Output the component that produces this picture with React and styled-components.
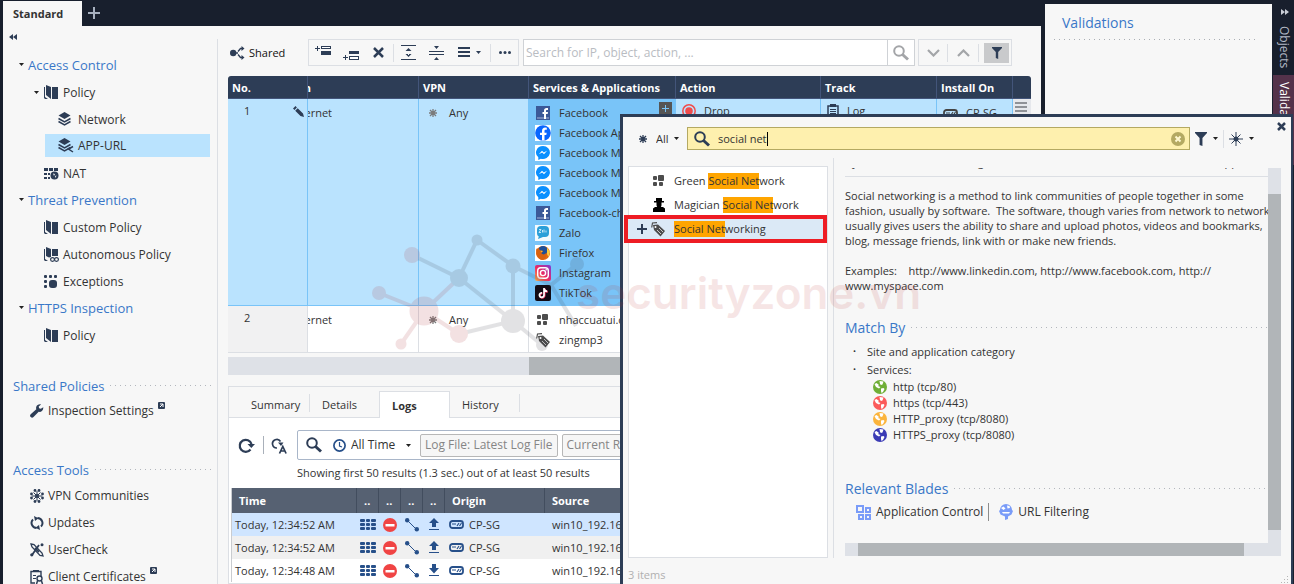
import React from 'react';
import styled, { createGlobalStyle, css } from 'styled-components';

const c = {
  night: '#181f2d',
  navy: '#2d3d56',
  paper: '#f7f7f7',
  line: '#dcdfe4',
  text: '#333333',
  blue: '#3a77c8',
  sky: '#bae3fe',
  skyDeep: '#79c4f8',
  track: '#dee1e7',
  thumb: '#b1b5b8',
};

const Global = createGlobalStyle`
  *, *::before, *::after { box-sizing: border-box; }
  body { margin: 0; background: ${c.night}; color: ${c.text}; font: 12px/16px "Open Sans", "Noto Sans", sans-serif; overflow: hidden; }
  button, input, select { font: inherit; color: inherit; margin: 0; }
  h2, p, ul { margin: 0; padding: 0; font-weight: 400; }
  ul { list-style: none; }
  a { color: inherit; text-decoration: none; }
  svg { display: block; flex: none; }
`;

/* ---------- icons ---------- */

const Svg = ({ w = 16, h = 16, color = c.navy, children, ...rest }) => (
  <svg width={w} height={h} viewBox={`0 0 ${w} ${h}`} fill={color} aria-hidden="true" {...rest}>{children}</svg>
);
const Caret = ({ color = '#222' }) => <Svg w={5} h={3} color={color}><path d="M0 0h5L2.5 3z" /></Svg>;
const DoubleArrow = ({ color, flip }) => (
  <Svg w={8} h={6} color={color}><path d={flip ? 'M0 0l4 3-4 3zM4 0l4 3-4 3z' : 'M4 0v6L0 3zM8 0v6L4 3z'} /></Svg>
);
const PolicyIcon = () => (
  <Svg w={15} h={15}><path d="M0 2h1v10l3 2H1l-1-1zM2 0l5 2v12L2 10zM8 2h6v12H8z" /></Svg>
);
const AutonomousIcon = () => (
  <Svg w={15} h={15}>
    <path d="M0 2h1v10l3 2H1l-1-1zM2 0l5 2v8L5 10.500 2 9zM8 2h6v7H8z" />
    <g fill="none" stroke={c.navy} strokeWidth="1.200"><circle cx="8.500" cy="12.500" r="1.900" /><circle cx="12.500" cy="12.500" r="1.900" /></g>
  </Svg>
);
const LayersIcon = ({ shared }) => (
  <Svg w={16} h={15}>
    <path d="M6.500 0L12.500 3.500 6.500 7 .5 3.500z" />
    <path d="M.5 6.500l6 3.500 6-3.500M.5 9.500l6 3.500 6-3.500" fill="none" stroke={c.navy} strokeWidth="1.500" />
    {shared && <path d="M15 8.500l-4.500 2.500 4.500 3" fill="none" stroke={c.navy} strokeWidth="1.500" />}
  </Svg>
);
const NatIcon = () => (
  <Svg w={15} h={13}>
    <path d="M0 1h4v3H0zM5 1h4v3H5zM10 1h4v3h-4zM0 6h3v2H0zM4 6h2v2H4zM0 10h3v2H0zM4 10h2v2H4z" />
    <circle cx="10.500" cy="8.500" r="4" />
    <path d="M9 6.500l2 .5-1 2zM11 9l1.500-.5L11.500 11z" fill={c.paper} />
  </Svg>
);
const ExceptionsIcon = () => (
  <Svg w={15} h={14}>
    <rect width="3" height="3" rx="1" /><rect x="5" width="3" height="3" rx="1" /><rect x="10" width="3" height="3" rx="1" />
    <rect y="5" width="3" height="3" rx="1" /><rect y="10" width="3" height="3" rx="1" /><rect x="5" y="5" width="8" height="8" rx="3" />
  </Svg>
);
const WrenchIcon = () => (
  <Svg w={14} h={14}><path d="M13.300 3.300l-2.500 1.500-1.700-.6-.4-1.800L11 .5C9 0 6.800 1 6.200 3c-.2.800-.1 1.500.1 2.200L.7 10.300a1.900 1.900 0 1 0 2.800 2.700l5.200-5.200c2.300.6 4.800-1.300 4.600-4.500z" /></Svg>
);
const VpnIcon = () => (
  <Svg w={14} h={14}>
    <path d="M7 2v10M2 7h10M3.500 3.500l7 7M10.500 3.500l-7 7" stroke={c.navy} />
    {[[5, 1.5], [9, 1.5], [1.5, 5], [1.5, 9], [12.5, 5], [12.5, 9], [5, 12.5], [9, 12.5]].map(([x, y]) => <circle key={`${x}-${y}`} cx={x} cy={y} r="1.400" />)}
    <circle cx="7" cy="7" r="2" />
  </Svg>
);
const UpdatesIcon = () => (
  <Svg w={14} h={14}>
    <path d="M6.500 12A5 5 0 0 1 3 3.500M7.500 2A5 5 0 0 1 11 10.500" fill="none" stroke={c.navy} strokeWidth="2" />
    <path d="M4 0l4.500 2.200L5 5zM10 14l-4.500-2.200L9 9z" />
  </Svg>
);
const UserCheckIcon = () => (
  <Svg w={14} h={14}>
    <path d="M1 1l3 .5 8 8.500 1 3-3-.5L2 4z" fill="none" stroke={c.navy} strokeWidth="1.300" />
    <path d="M9 2L2 12M5 5l4 4" stroke={c.navy} strokeWidth="1.800" /><circle cx="12" cy="1.800" r="1.500" /><circle cx="1.800" cy="11.800" r="1.600" />
  </Svg>
);
const CertIcon = () => (
  <Svg w={14} h={14}>
    <path d="M5 13H1V1.500h10V6" fill="none" stroke={c.navy} strokeWidth="1.400" /><path d="M3 0h6v2H3zM3 5h3v1H3zM3 8h3v1H3z" />
    <circle cx="9.500" cy="8.500" r="2.500" fill="none" stroke={c.navy} strokeWidth="1.400" /><path d="M7.500 11L6.500 14M11.500 11l1 3" stroke={c.navy} strokeWidth="1.500" />
  </Svg>
);
const ExternalIcon = () => (
  <Svg w={7} h={7}><rect width="7" height="7" rx="1" /><path d="M2 2h3v3M5 2L2 5" fill="none" stroke="#fff" /></Svg>
);
const SharedIcon = () => (
  <Svg w={15} h={14}>
    <circle cx="3.200" cy="7" r="3.200" /><path d="M6 7h2M12 2.500h-1.500L8 5.500M12 11.500h-1.500L8 8.500" fill="none" stroke={c.navy} strokeWidth="1.300" />
    <path d="M11.500 0l3 2.500-3 2.500zM11.500 9l3 2.500-3 2.500z" />
  </Svg>
);
const AddAbove = () => (
  <Svg w={16} h={16}><path d="M2 1h1v2h2v1H3v2H2V4H0V3h2zM6 1h10v3H6zM6 6h10v4H6z" /><path d="M7 2h8v1H7z" fill="#fff" /></Svg>
);
const AddBelow = () => (
  <Svg w={16} h={16}><path d="M2 10h1v2h2v1H3v2H2v-2H0v-1h2zM6 6h10v3H6zM6 11h10v4H6z" /><path d="M7 12h8v2H7z" fill="#fff" /></Svg>
);
const CrossIcon = ({ w = 11, t = 2.5 }) => (
  <Svg w={w} h={w}><path d={`M1 1L${w - 1} ${w - 1}M${w - 1} 1L1 ${w - 1}`} stroke={c.navy} strokeWidth={t} /></Svg>
);
const ExpandIcon = () => <Svg w={15} h={16}><path d="M0 0h15v1H0zM0 14h15v1H0zM7.500 3l3 3h-6zM7.500 12l3-3h-6zM7 5h1v1H7zM7 9h1v1H7z" /></Svg>;
const CollapseIcon = () => <Svg w={15} h={16}><path d="M0 6h15v1H0zM0 9h15v1H0zM5 1h5L7.500 4zM5 15h5L7.500 12z" /></Svg>;
const MenuLines = ({ w = 12, color }) => <Svg w={w} h={11} color={color}><path d={`M0 0h${w}v2H0zM0 4h${w}v2H0zM0 8h${w}v2H0z`} /></Svg>;
const DotsIcon = () => <Svg w={12} h={3}><circle cx="1.500" cy="1.500" r="1.500" /><circle cx="6" cy="1.500" r="1.500" /><circle cx="10.500" cy="1.500" r="1.500" /></Svg>;
const SearchIcon = ({ color = c.navy }) => (
  <Svg w={16} h={16}><circle cx="6" cy="6" r="4.800" fill="none" stroke={color} strokeWidth="2" /><path d="M9.500 9.500l5.500 5" stroke={color} strokeWidth="3" /></Svg>
);
const Chevron = ({ up }) => <Svg w={13} h={8}><path d={up ? 'M1 7l5.500-5.500L12 7' : 'M1 1l5.500 5.500L12 1'} fill="none" stroke="#a3a5a8" strokeWidth="2.200" /></Svg>;
const FunnelIcon = ({ w = 10 }) => <Svg w={w} h={w + 2}><path d={`M0 0h${w}v1L${w * 0.62} ${w * 0.5}V${w + 2}L${w * 0.38} ${w + 1}V${w * 0.5}L0 1z`} /></Svg>;
const Asterisk = ({ color = '#7b7b7b' }) => (
  <Svg w={8} h={8}><path d="M4 0v8M0 4h8M1 1l6 6M7 1L1 7" stroke={color} strokeWidth="1.300" /></Svg>
);
const PencilIcon = () => <Svg w={11} h={11}><path d="M0 2.500L2.500 0l1.400 1.400L1.500 4zM2.200 4.700l2.500-2.500L10 7.500 11 11 7.500 10z" /></Svg>;
const SiteIcon = () => (
  <Svg w={12} h={12} color="#4d4d4d"><rect y="1" width="4" height="4" rx="1" /><rect x="5" width="6" height="6" rx="1" /><rect y="7" width="4" height="4" rx="1" /><rect x="6" y="7" width="4" height="4" rx="1" /></Svg>
);
const TagIcon = () => (
  <Svg w={15} h={15} color="#4d4d4d">
    <path d="M2 3l5-.5L14 9l-4.500 5.500L3 8z" /><path d="M.7 5.500L1.500 1l4.500-.3" fill="none" stroke="#4d4d4d" strokeWidth="1.200" />
    <circle cx="4.500" cy="5" r="1" fill="#fff" /><path d="M6 8l4 4M8 6l4 4" stroke="#eee" strokeWidth=".8" />
  </Svg>
);
const MagicianIcon = () => <Svg w={12} h={14} color="#000"><path d="M3 0h6v3h2v1.500H1V3h2zM3.500 4h5v3a2.500 2.500 0 0 1-5 0zM0 14v-3.500L2 9h8l2 1.500V14zM5 8h2v2H5z" /></Svg>;
const PlusIcon = ({ w = 12, t = 2, color }) => <Svg w={w} h={w} color={color}><path d={`M${(w - t) / 2} 0h${t}v${w}h-${t}zM0 ${(w - t) / 2}h${w}v${t}H0z`} /></Svg>;
const DropIcon = () => <Svg w={14} h={14}><circle cx="7" cy="7" r="6.200" fill="none" stroke="#f04c4c" strokeWidth="1.500" /><circle cx="7" cy="7" r="3.800" fill="#f04c4c" /></Svg>;
const LogIcon = () => (
  <Svg w={12} h={14}><path d="M1 2h10v11H1z" fill="none" stroke={c.navy} strokeWidth="1.500" /><path d="M3 0h6v3H3zM3 5h6v1H3zM3 7h6v1H3zM3 9h6v1H3z" /></Svg>
);
const GatewayIcon = ({ color = '#444' }) => (
  <Svg w={15} h={9}><rect x="1" y="1" width="13" height="7" rx="2.500" fill="none" stroke={color} strokeWidth="1.800" /><path d="M3 4h4M8 6l2-3M10.500 6l2-3" stroke={color} strokeWidth="1.200" /></Svg>
);
const FbSquare = () => (
  <Svg><rect x="1" y="1" width="14" height="14" fill="#3b5998" /><path d="M2 12h12v2H2z" fill="#7186b8" /><path d="M9 14V9H7.500V7H9V5.500C9 4 10 3 11.500 3H13v2h-1c-.7 0-1 .3-1 1v1h2l-.3 2H11v5z" fill="#fff" /></Svg>
);
const FbRound = () => (
  <Svg><rect width="16" height="16" fill="#fff" /><circle cx="8" cy="8" r="7.800" fill="#0866ff" /><path d="M7 15.500V10H5V7.700h2V6c0-2.300 1.200-3.500 3.200-3.500l1.600.2v2h-1c-1 0-1.300.5-1.300 1.300v1.700h2.200L11.300 10H9.500v5.500z" fill="#fff" /></Svg>
);
const Messenger = () => (
  <Svg><rect width="16" height="16" fill="#fff" /><path d="M8 1a7 6.500 0 0 0-4.700 11.300V15l2.500-1.300A7 6.500 0 1 0 8 1z" fill="#0a90ff" /><path d="M3.800 9.200L7 5.800l1.800 1.700 3.300-1.700L9 9.200 7.200 7.500z" fill="#fff" /></Svg>
);
const ZaloIcon = () => (
  <Svg><rect width="16" height="16" fill="#f4fafd" /><rect x="2" y="1" width="12" height="11" rx="4" fill="#2b9fd8" /><path d="M4 11l-1 3 5-2z" fill="#2b9fd8" /><path d="M4 4.500h2L4 7.500h2M7.500 5v2.500M9 4.500v3M11 5.500v2" fill="none" stroke="#d5effb" strokeWidth=".9" /></Svg>
);
const FirefoxIcon = () => (
  <Svg><rect width="16" height="16" fill="#fff" /><circle cx="8" cy="8" r="7" fill="#e66b12" /><circle cx="8" cy="5.500" r="4.500" fill="#1f4f96" /><path d="M1.300 4c1.500-1 3 0 4 1.500l3 .5-2 2c1 2 4 2 5-.5C12 13 9 15 7 15 3 14 .5 9 1.300 4z" fill="#d9620f" /><path d="M12 2.500l3 4.500-1.500 5-1.500-3z" fill="#fbc93d" /><path d="M5.500 5.500l2.500.5-2 1.500z" fill="#f9b233" /></Svg>
);
const InstagramIcon = () => (
  <Svg>
    <defs><linearGradient id="ig" x1="0" y1="1" x2="1" y2="0"><stop offset="0" stopColor="#fdb84a" /><stop offset=".45" stopColor="#ee2a5e" /><stop offset="1" stopColor="#7a3bd8" /></linearGradient></defs>
    <rect width="16" height="16" rx="2" fill="url(#ig)" /><g fill="none" stroke="#fff" strokeWidth="1.400"><rect x="2.700" y="2.700" width="10.600" height="10.600" rx="3" /><circle cx="8" cy="8" r="2.600" /></g><circle cx="11.200" cy="4.800" r=".8" fill="#fff" />
  </Svg>
);
const TikTokIcon = () => (
  <Svg><rect width="16" height="16" rx="2" fill="#120b14" /><path d="M9 3v7a2.300 2.300 0 1 1-2-2.200M9 3.500c.3 1.700 1.500 2.700 3.200 2.800" fill="none" stroke="#f5315d" strokeWidth="1.800" transform="translate(.6 .5)" /><path d="M9 3v7a2.300 2.300 0 1 1-2-2.200M9 3.500c.3 1.700 1.500 2.700 3.200 2.800" fill="none" stroke="#fff" strokeWidth="1.700" /></Svg>
);
const RefreshIcon = ({ auto }) => (
  <Svg w={17} h={17}>
    {auto ? (
      <><path d="M6 11A4.300 4.300 0 1 1 9.500 4.500" fill="none" stroke={c.navy} strokeWidth="1.700" /><path d="M7 5.500h5.500L10 9z" /><path d="M8.500 16.500l3.300-7 3.300 7M10 14h4" fill="none" stroke={c.navy} strokeWidth="1.700" /></>
    ) : (
      <><path d="M12.500 12.500A6 6 0 1 1 13.500 7" fill="none" stroke={c.navy} strokeWidth="2.200" /><path d="M9.500 7H17L13.300 11z" /></>
    )}
  </Svg>
);
const ClockIcon = () => <Svg w={13} h={13}><circle cx="6.500" cy="6.500" r="5.600" fill="none" stroke="#27508a" strokeWidth="1.700" /><path d="M6.500 3v4l2.500 1" fill="none" stroke="#27508a" strokeWidth="1.200" /></Svg>;
const BricksIcon = () => (
  <Svg w={16} h={12} color="#27508a">{[0, 4, 8].map((y) => [0, 6, 11].map((x) => <rect key={`${x}-${y}`} x={x} y={y} width={x === 6 ? 4 : 5} height="3" rx="1" />))}</Svg>
);
const BlockIcon = () => <Svg w={14} h={14}><circle cx="7" cy="7" r="7" fill="#f04444" /><path d="M2.500 6h9v2.500h-9z" fill="#fff" /></Svg>;
const LinkNodes = () => <Svg w={14} h={14} color="#27508a"><path d="M2 2l10 10" stroke="#27508a" /><circle cx="2.200" cy="2.200" r="2.200" /><circle cx="11.800" cy="11.300" r="2.200" /></Svg>;
const UpDown = ({ down }) => <Svg w={10} h={13} color="#27508a"><path d={down ? 'M3 0h4v4h3L5 9.500 0 4h3z' : 'M5 0l5 5H7v4H3V5H0z'} /><path d="M0 11h10v1H0z" /></Svg>;
const ClearIcon = () => <Svg w={14} h={14}><circle cx="7" cy="7" r="7" fill="#b4a962" /><path d="M4.500 4.500l5 5M9.500 4.500l-5 5" stroke="#fff8d0" strokeWidth="2" /></Svg>;
const SparkIcon = () => (
  <Svg w={14} h={14}><path d="M7 0v14M0 7h14M2.500 2.500l9 9M11.500 2.500l-9 9" stroke={c.navy} /><circle cx="7" cy="7" r="2.500" /></Svg>
);
const Globe = ({ color }) => (
  <Svg w={14} h={14}><circle cx="7" cy="7" r="7" fill={color} /><path d="M1.500 4l2-1L6 5l-1 1 2.500 1L6 8.500 3 7zM6.500 1l4 .5-1 3-1.500.5-1-1zM8 8.500l2.500-.5 1 1-1.500 3-1.500 1-.5-2z" fill="#fff" /></Svg>
);
const AppControlIcon = () => (
  <Svg w={15} h={15}><g fill="none" stroke="#7a9cf8" strokeWidth="2"><rect x="1" y="1" width="6" height="6" /><rect x="10" y="3" width="4" height="4" /><rect x="3" y="10" width="4" height="4" /><rect x="10" y="10" width="4" height="4" /></g></Svg>
);
const UrlFilterIcon = () => (
  <Svg w={14} h={16} color="#7a9cf8"><path d="M7 0a6 6 0 0 1 6 6l1 1-1.500 3.500L9 12.500V15l-3 1v-3.500L1.500 10.500 0 7l1-1a6 6 0 0 1 6-6z" /><path d="M2 4l2.500-1.500 2 2-2 1.500zM8 1.500l2.500.5.5 2-2.500.5zM3 8l8 0-1 1.500H4z" fill="#fff" /></Svg>
);
const Grip = () => <Svg w={8} h={8} color="#b5b5b5"><path d="M6 0h1v1H6zM6 3h1v1H6zM3 3h1v1H3zM6 6h1v1H6zM3 6h1v1H3zM0 6h1v1H0z" /></Svg>;

/* ---------- window frame ---------- */

const Frame = styled.div`
  position: relative;
  display: flex;
  height: 100vh;
  padding-left: 3px;
  overflow: hidden;
`;
const Workspace = styled.main`
  flex: 1;
  min-width: 0;
  display: flex;
  flex-direction: column;
`;
const TabStrip = styled.div`
  display: flex;
  align-items: center;
  gap: 6px;
  height: 26px;
`;
const PageTab = styled.button`
  align-self: flex-end;
  width: 79px;
  height: 25px;
  padding: 0 0 0 10px;
  border: 0;
  background: ${c.paper};
  font-size: 11px;
  font-weight: 700;
  text-align: left;
`;
const BareButton = styled.button`
  display: inline-flex;
  align-items: center;
  gap: 6px;
  padding: 0;
  border: 0;
  background: none;
`;
const Page = styled.div`
  flex: 1;
  min-height: 0;
  display: flex;
  background: ${c.paper};
`;

/* ---------- sidebar ---------- */

const Sidebar = styled.nav`
  width: 215px;
  flex: none;
  margin-top: 13px;
  border-right: 1px solid ${c.line};
`;
const CollapseRow = styled.div`
  height: 13px;
  padding-left: 6px;
  display: flex;
  align-items: flex-start;
  line-height: 1;
  & > button { margin-top: -5px; }
`;
const Group = styled.button`
  display: flex;
  align-items: center;
  gap: 4px;
  height: 27px;
  width: 100%;
  padding: 0 0 2px 16px;
  border: 0;
  background: none;
  font-size: 13px;
  color: ${c.blue};
`;
const NavItem = styled.a`
  display: flex;
  align-items: center;
  gap: ${(p) => p.$gap || 5}px;
  height: ${(p) => p.$h || 27}px;
  padding-left: ${(p) => p.$indent}px;
`;
const ActiveItem = styled(NavItem)`
  height: 23px;
  margin: 1px 7px 3px 42px;
  background: ${c.sky};
`;
const IconSlot = styled.span`
  display: flex;
  justify-content: flex-start;
  width: ${(p) => p.$w || 14}px;
  flex: none;
`;
const Raised = styled.span`
  align-self: flex-start;
  padding-top: 4px;
`;
const DottedHeading = styled.h2`
  display: flex;
  align-items: center;
  gap: 6px;
  height: 25px;
  font-size: ${(p) => p.$size || 13}px;
  color: ${c.blue};
  &::after {
    content: '';
    flex: 1;
    height: 1px;
    background: repeating-linear-gradient(90deg, #b3b7bd 0 1px, transparent 1px 5px);
  }
`;
const SideSection = styled.section`
  margin-top: ${(p) => p.$gap}px;
  & > h2 { padding: 0 4px 0 10px; }
`;

/* ---------- rule base ---------- */

const Main = styled.section`
  flex: 1;
  min-width: 0;
  padding: 13px 10px 0;
  display: flex;
  flex-direction: column;
`;
const Toolbar = styled.div`
  display: flex;
  align-items: center;
  height: 27px;
  margin-bottom: 10px;
`;
const SharedLabel = styled.span`
  display: flex;
  align-items: center;
  gap: 4px;
  width: 80px;
  padding-left: 2px;
  font-size: 11px;
  color: #111;
`;
const ToolGroup = styled.div`
  display: flex;
  align-items: center;
  height: 27px;
  padding: 0 6px;
  border: 1px solid ${c.line};
`;
const Tool = styled.button`
  display: inline-flex;
  align-items: center;
  justify-content: center;
  gap: 6px;
  width: ${(p) => p.$w || 28}px;
  height: 20px;
  padding: 0;
  border: 0;
  background: ${(p) => (p.$on ? '#c9cacc' : 'none')};
`;
const Divider = styled.span`
  width: 1px;
  height: ${(p) => p.$h || 18}px;
  background: ${(p) => p.$color || c.line};
`;
const SearchField = styled.div`
  flex: 1;
  display: flex;
  height: 27px;
  margin: 0 3px 0 4px;
  border: 1px solid #cfd2d6;
  background: #fff;
  input { flex: 1; min-width: 0; padding: 0 2px; border: 0; background: none; outline: 0; }
  input::placeholder { color: #b9bcc2; opacity: 1; }
  button { width: 27px; justify-content: center; border-left: 1px solid #cfd2d6; }
`;
const NavGroup = styled(ToolGroup)`
  margin-right: 19px;
  padding: 0 2px 0 0;
`;

const Rules = styled.table`
  width: 100%;
  table-layout: fixed;
  border-collapse: separate;
  border-spacing: 0;
  background: #fff;
  font-size: 11px;
  th {
    height: 23px;
    padding: 2px 4px 0;
    background: ${c.navy};
    border-right: 1px solid #43557a;
    border-bottom: 1px solid #43557a;
    color: #fff;
    font-weight: 700;
    text-align: left;
    white-space: nowrap;
    overflow: hidden;
  }
  th:nth-child(1) { border-top-left-radius: 3px; }
  th:last-child { border-right: 0; border-top-right-radius: 3px; }
`;
const RuleCell = styled.td`
  padding: ${(p) => (p.$up ? 2 : 4)}px 6px 2px;
  vertical-align: top;
  overflow: hidden;
  white-space: nowrap;
  border-right: 1px solid ${(p) => (p.$on ? c.skyDeep : c.line)};
  border-bottom: 1px solid ${(p) => (p.$on ? c.skyDeep : c.line)};
  background: ${(p) => (p.$on === 'deep' ? c.skyDeep : p.$on ? c.sky : p.$gray ? '#f1f1f2' : '#fff')};
`;
const NumberCell = styled(RuleCell)`
  padding-left: 16px;
  padding-right: 3px;
`;
const MarginCell = styled(RuleCell)`
  padding: 3px 2px;
  border-right: 0;
  background: #e6e8ec;
`;
const Entry = styled.div`
  display: flex;
  align-items: center;
  gap: ${(p) => p.$gap || 8}px;
  height: 20px;
  justify-content: ${(p) => (p.$spread ? 'space-between' : 'flex-start')};
`;
const EntryIcon = styled.span`
  display: flex;
  justify-content: center;
  width: 16px;
  flex: none;
`;
const Clip = styled.div`
  display: flex;
  justify-content: flex-end;
  width: ${(p) => p.$w}px;
  margin-left: ${(p) => p.$pull}px;
  overflow: hidden;
`;
const AddHere = styled.button`
  display: flex;
  align-items: center;
  justify-content: center;
  width: 13px;
  height: 13px;
  margin: -10px -3px 0 auto;
  padding: 0;
  border: 0;
  background: #555;
`;
const ScrollTrack = styled.div`
  display: flex;
  height: ${(p) => p.$h}px;
  margin-top: ${(p) => p.$top || 0}px;
  background: ${c.track};
`;
const ScrollThumb = styled.div`
  flex: 1;
  margin: ${(p) => p.$margin || 0};
  background: ${c.thumb};
`;

/* ---------- logs ---------- */

const LogPanel = styled.section`
  flex: 1;
  min-height: 0;
  margin-top: 11px;
  border: 1px solid ${c.line};
  background: #fff;
`;
const LogTabs = styled.div`
  display: flex;
  align-items: flex-end;
  height: 31px;
  padding-left: 10px;
  border-bottom: 1px solid ${c.line};
  background: ${c.paper};
  font-size: 11px;
`;
const LogTab = styled.button`
  height: 26px;
  width: ${(p) => p.$w}px;
  padding: 2px 0 0 12px;
  text-align: left;
  background: ${c.paper};
  border: 0;
  ${(p) => p.$on && css`
    background: #fff;
    border: 1px solid ${c.line};
    border-bottom: 0;
    margin-bottom: -1px;
    height: 27px;
    font-weight: 700;
  `}
`;
const TabDivider = styled(Divider)`
  margin-bottom: 5px;
`;
const QueryRow = styled.div`
  display: flex;
  align-items: center;
  height: 30px;
  margin-top: 12px;
  padding: 0 9px;
`;
const QueryBox = styled.div`
  flex: 1;
  min-width: 0;
  display: flex;
  align-items: center;
  height: 30px;
  margin-left: 9px;
  padding-left: 8px;
  border: 1px solid #a9b6c9;
  border-radius: 2px;
  overflow: hidden;
`;
const Select = styled.select`
  appearance: none;
  width: ${(p) => p.$w}px;
  padding: 0;
  border: 0;
  background: none;
  font-size: ${(p) => p.$size || 12}px;
  line-height: 20px;
`;
const Chip = styled.button`
  height: 23px;
  margin-right: 4px;
  padding: 0 4px;
  border: 1px solid #b7b7b7;
  border-radius: 2px;
  background: #f6f6f6;
  color: #858585;
  white-space: nowrap;
`;
const ResultLine = styled.p`
  height: 28px;
  padding: 5px 0 0 68px;
  font-size: 11px;
`;
const LogTable = styled.table`
  width: calc(100% - 4px);
  margin-left: 2px;
  table-layout: fixed;
  border-collapse: separate;
  border-spacing: 0;
  border-left: 1px solid #c9ccd0;
  font-size: 11px;
  th {
    height: 25px;
    padding: 0 7px;
    background: #566172;
    border-right: 1px solid #424d5e;
    color: #fff;
    text-align: left;
  }
  td { height: 23px; padding: 0 0 0 3px; white-space: nowrap; overflow: hidden; }
`;
const LogRow = styled.tr`
  background: ${(p) => p.$bg};
`;
const CellFlex = styled.div`
  display: flex;
  align-items: center;
  gap: 5px;
  padding-left: ${(p) => p.$pad || 0}px;
`;

/* ---------- right side ---------- */

const Validations = styled.aside`
  width: 227px;
  flex: none;
  margin: 4px 1px 0 4px;
  padding: 8px 16px 0 9px;
  background: ${c.paper};
`;
const ValidationTitle = styled.h2`
  padding: 0 8px 6px;
  font-size: 14px;
  line-height: 21px;
  color: ${c.blue};
`;
const DottedRule = styled.div`
  height: 1px;
  background: repeating-linear-gradient(90deg, #a9adb3 0 1px, transparent 1px 5px);
`;
const Rail = styled.div`
  width: 21px;
  flex: none;
  display: flex;
  flex-direction: column;
  padding-top: 9px;
  & > button:first-child { padding-left: 8px; }
`;
const RailTab = styled.button`
  writing-mode: vertical-rl;
  height: ${(p) => p.$h}px;
  width: 21px;
  padding: ${(p) => p.$top}px 0 0;
  border: 0;
  text-align: left;
  line-height: 14px;
  color: ${(p) => (p.$on ? '#fff' : '#b4bac6')};
  background: ${(p) => (p.$on ? '#54324a' : 'none')};
`;

/* ---------- object picker ---------- */

const Picker = styled.div`
  position: absolute;
  top: 114px;
  left: 620px;
  right: 1px;
  bottom: 0;
  display: flex;
  flex-direction: column;
  border: 3px solid ${c.navy};
  border-bottom: 0;
  border-right-width: 2px;
  background: ${c.paper};
  font-size: 11px;
`;
const PickerBar = styled.div`
  display: flex;
  align-items: center;
  height: 41px;
  padding: 2px 0 0 16px;
  gap: 5px;
`;
const PickerSearch = styled.div`
  flex: 1;
  display: flex;
  align-items: center;
  height: 23px;
  margin-left: 3px;
  padding: 0 4px 0 6px;
  border: 1px solid #b4a962;
  background: #fef0ae;
  input { field-sizing: content; margin-left: 8px; padding: 0; border: 0; background: none; outline: 0; }
  & > button { margin-left: auto; }
`;
const TextCursor = styled.span`
  width: 1px;
  height: 14px;
  background: #000;
`;
const CloseButton = styled(BareButton)`
  align-self: flex-start;
  margin: 3px 5px 0 18px;
`;
const PickerBody = styled.div`
  flex: 1;
  min-height: 0;
  display: flex;
`;
const ResultList = styled.ul`
  width: 200px;
  flex: none;
  margin: 8px 5px 0 5px;
  padding-top: 2px;
  border: 1px solid ${c.line};
  background: #fff;
`;
const Result = styled.li`
  display: flex;
  align-items: center;
  gap: 7px;
  height: 24px;
  padding-left: 22px;
  mark { padding: 0 0 1px; background: #ffa500; color: inherit; }
`;
const PickedResult = styled(Result)`
  height: 28px;
  margin: -2px 0 0 -5px;
  padding-left: 9px;
  gap: 4px;
  border: 4px solid #ee1c24;
  background: #dbe9f6;
  & > span:last-child { margin-left: 4px; }
`;
const Detail = styled.div`
  flex: 1;
  min-width: 0;
  display: flex;
  flex-direction: column;
  padding: 10px 10px 0 11px;
  border-left: 1px solid ${c.line};
`;
const DetailView = styled.div`
  display: flex;
  height: 375px;
`;
const DetailText = styled.div`
  flex: 1;
  min-width: 0;
  overflow: hidden;
  & > hr { height: 1px; margin: 0 0 11px; border: 0; background: ${c.line}; }
`;
const CutLine = styled.div`
  display: flex;
  align-items: flex-end;
  justify-content: space-between;
  height: 8px;
  padding: 0 30px 6px 7px;
  overflow: hidden;
  line-height: 16px;
`;
const Prose = styled.p`
  line-height: 15px;
  white-space: pre;
`;
const Bullets = styled.ul`
  padding: 3px 0 0 22px;
  & > li { line-height: 18px; }
  & > li::before { content: '•'; float: left; margin-left: -14px; font-size: 8px; line-height: 16px; }
`;
const Service = styled.div`
  display: flex;
  align-items: center;
  gap: 6px;
  height: 16px;
  padding-left: 6px;
`;
const Blades = styled.div`
  display: flex;
  align-items: center;
  gap: 5px;
  height: 22px;
  padding-left: 11px;
  font-size: 12px;
`;
const VTrack = styled.div`
  width: 13px;
  flex: none;
  display: flex;
  flex-direction: column;
  padding: 26px 0 13px;
  background: ${c.track};
`;
const PickerFooter = styled.div`
  display: flex;
  align-items: flex-end;
  justify-content: space-between;
  height: 26px;
  padding: 0 2px 0 5px;
  color: #b0b0b0;
  line-height: 18px;
`;

/* ---------- watermark ---------- */

const Watermark = styled.div`
  position: absolute;
  top: 230px;
  left: 370px;
  pointer-events: none;
`;
const WatermarkName = styled.span`
  position: absolute;
  top: 37px;
  left: 206px;
  font: 600 44px/52px Inter, "Open Sans", sans-serif;
  color: #b92f2f;
  opacity: 0.12;
`;

const nodes = [
  [42, 25, 8, 1], [107, 10, 5.5], [89, 48, 9], [143, 36, 7.5], [9, 63, 7, 1], [54, 81, 14.5, 1],
  [143, 91, 12], [89, 104, 9, 1], [31, 114, 5.5, 1], [207, 34, 7], [172, 115, 6],
];
const links = [[42, 25, 89, 48], [107, 10, 89, 48], [107, 10, 143, 36], [89, 48, 54, 81, 1], [9, 63, 54, 81, 1], [54, 81, 31, 114, 1], [54, 81, 89, 104, 1], [89, 104, 143, 91], [89, 48, 143, 91], [143, 36, 143, 91], [143, 36, 181, 55], [181, 55, 207, 34], [181, 55, 206, 96], [143, 91, 172, 115]];

function NetworkMark() {
  return (
    <svg width="230" height="130" viewBox="0 0 230 130">
      <g opacity="0.14">
        {links.map(([a, b, d, e, red]) => <line key={`${a}-${b}-${d}-${e}`} x1={a} y1={b} x2={d} y2={e} stroke={red ? '#a83038' : '#3c3c48'} strokeWidth="4" />)}
        {nodes.map(([x, y, r, red]) => <circle key={`${x}-${y}`} cx={x} cy={y} r={r} fill={red ? '#b03038' : '#3c3c48'} />)}
      </g>
    </svg>
  );
}

/* ---------- data ---------- */

const services = [
  ['Facebook', FbSquare], ['Facebook Apps', FbRound], ['Facebook Messenger', Messenger], ['Facebook Mentions', Messenger],
  ['Facebook Media', Messenger], ['Facebook-chat', FbSquare], ['Zalo', ZaloIcon], ['Firefox', FirefoxIcon],
  ['Instagram', InstagramIcon], ['TikTok', TikTokIcon],
];
const logs = [
  ['Today, 12:34:52 AM', false, '#cfe5ff'], ['Today, 12:34:52 AM', false, '#f0f0f0'], ['Today, 12:34:48 AM', true, '#ffffff'],
];
const ports = [['http (tcp/80)', '#6fae36'], ['https (tcp/443)', '#fb5a5a'], ['HTTP_proxy (tcp/8080)', '#fbb43c'], ['HTTPS_proxy (tcp/8080)', '#3b3bb5']];

function Item({ icon, indent = 41, h, w, gap, caret, external, children }) {
  return (
    <NavItem href="#" $indent={indent} $h={h} $gap={gap}>
      {caret && <Caret />}
      <IconSlot $w={w}>{icon}</IconSlot>
      {children}
      {external && <Raised><ExternalIcon /></Raised>}
    </NavItem>
  );
}

function SideNav() {
  return (
    <Sidebar>
      <CollapseRow><BareButton aria-label="Collapse"><DoubleArrow /></BareButton></CollapseRow>
      <Group><Caret />Access Control</Group>
      <Item icon={<PolicyIcon />} indent={31} caret>Policy</Item>
      <Item icon={<LayersIcon />} indent={55} w={15}>Network</Item>
      <ActiveItem href="#" $indent={13}><IconSlot $w={15}><LayersIcon shared /></IconSlot>APP-URL</ActiveItem>
      <Item icon={<NatIcon />}>NAT</Item>
      <Group><Caret />Threat Prevention</Group>
      <Item icon={<PolicyIcon />}>Custom Policy</Item>
      <Item icon={<AutonomousIcon />}>Autonomous Policy</Item>
      <Item icon={<ExceptionsIcon />}>Exceptions</Item>
      <Group><Caret />HTTPS Inspection</Group>
      <Item icon={<PolicyIcon />}>Policy</Item>
      <SideSection $gap={24}>
        <DottedHeading>Shared Policies</DottedHeading>
        <Item icon={<WrenchIcon />} indent={27} h={25} gap={4} external>Inspection Settings</Item>
      </SideSection>
      <SideSection $gap={34}>
        <DottedHeading>Access Tools</DottedHeading>
        <Item icon={<VpnIcon />} indent={27} gap={4}>VPN Communities</Item>
        <Item icon={<UpdatesIcon />} indent={27} gap={4}>Updates</Item>
        <Item icon={<UserCheckIcon />} indent={27} gap={4}>UserCheck</Item>
        <Item icon={<CertIcon />} indent={27} gap={4} external>Client Certificates</Item>
      </SideSection>
    </Sidebar>
  );
}

function RuleToolbar() {
  return (
    <Toolbar>
      <SharedLabel><SharedIcon />Shared</SharedLabel>
      <ToolGroup>
        <Tool aria-label="Add rule above" $w={16}><AddAbove /></Tool>
        <Tool aria-label="Add rule below" $w={40}><AddBelow /></Tool>
        <Tool aria-label="Delete rule" $w={15}><CrossIcon /></Tool>
        <Tool as="span" $w={15}><Divider /></Tool>
        <Tool aria-label="Expand" $w={15}><ExpandIcon /></Tool>
        <Tool aria-label="Collapse" $w={41}><CollapseIcon /></Tool>
        <Tool aria-label="View" $w={25}><MenuLines /><Caret color={c.navy} /></Tool>
        <Tool as="span" $w={16}><Divider /></Tool>
        <Tool aria-label="More" $w={14}><DotsIcon /></Tool>
      </ToolGroup>
      <SearchField>
        <input aria-label="Search rules" placeholder="Search for IP, object, action, ..." />
        <BareButton aria-label="Search"><SearchIcon color="#a3a5a8" /></BareButton>
      </SearchField>
      <NavGroup>
        <Tool aria-label="Next"><Chevron /></Tool><Divider />
        <Tool aria-label="Previous" $w={30}><Chevron up /></Tool><Divider />
        <Tool as="span" $w={5} />
        <Tool aria-label="Filter" $w={25} $on><FunnelIcon /></Tool>
      </NavGroup>
    </Toolbar>
  );
}

const AnyEntry = () => <Entry><EntryIcon><Asterisk /></EntryIcon>Any</Entry>;

function RuleTable() {
  return (
    <Rules>
      <colgroup>
        {[80, 111, 110, 147, 145, 116, 76].map((w, i) => <col key={i} width={w} />)}
        <col />
      </colgroup>
      <thead>
        <tr>
          <th>No.</th><th><Clip $w={3} $pull={-4}>Destination</Clip></th><th>VPN</th><th>Services &amp; Applications</th>
          <th>Action</th><th>Track</th><th>Install On</th><th aria-label="Options" />
        </tr>
      </thead>
      <tbody>
        <tr>
          <NumberCell $on="light" $up><Entry $spread>1<PencilIcon /></Entry></NumberCell>
          <RuleCell $on="light"><Entry><Clip $w={24} $pull={-6}>Internet</Clip></Entry></RuleCell>
          <RuleCell $on="light"><AnyEntry /></RuleCell>
          <RuleCell $on="deep">
            {services.map(([name, Icon], i) => (
              <Entry key={name}><EntryIcon><Icon /></EntryIcon>{name}{i === 0 && <AddHere aria-label="Add item"><PlusIcon w={7} t={1} color="#79c4f8" /></AddHere>}</Entry>
            ))}
          </RuleCell>
          <RuleCell $on="light" $up><Entry><DropIcon />Drop</Entry></RuleCell>
          <RuleCell $on="light" $up><Entry><LogIcon />Log</Entry></RuleCell>
          <RuleCell $on="light"><Entry><GatewayIcon />CP-SG</Entry></RuleCell>
          <MarginCell><MenuLines color="#8f9297" /></MarginCell>
        </tr>
        <tr>
          <NumberCell $gray $up><Entry>2</Entry></NumberCell>
          <RuleCell><Entry><Clip $w={24} $pull={-6}>Internet</Clip></Entry></RuleCell>
          <RuleCell><AnyEntry /></RuleCell>
          <RuleCell>
            <Entry><EntryIcon><SiteIcon /></EntryIcon>nhaccuatui.com</Entry>
            <Entry><EntryIcon><TagIcon /></EntryIcon>zingmp3</Entry>
          </RuleCell>
          <RuleCell /><RuleCell /><RuleCell /><MarginCell />
        </tr>
      </tbody>
    </Rules>
  );
}

function LogsView() {
  return (
    <LogPanel>
      <LogTabs>
        <LogTab $w={70}>Summary</LogTab><TabDivider />
        <LogTab $w={69}>Details</LogTab>
        <LogTab $w={71} $on>Logs</LogTab>
        <LogTab $w={69}>History</LogTab><TabDivider />
      </LogTabs>
      <QueryRow>
        <BareButton aria-label="Refresh"><RefreshIcon /></BareButton>
        <Tool as="span" $w={16}><Divider $color="#a9b0ba" /></Tool>
        <BareButton aria-label="Auto refresh"><RefreshIcon auto /></BareButton>
        <QueryBox>
          <SearchIcon />
          <CellFlex $pad={11}>
            <ClockIcon />
            <Select $w={50} $size={12} aria-label="Time range" defaultValue="All Time"><option>All Time</option></Select>
            <Caret />
          </CellFlex>
          <Tool as="span" $w={9} />
          <Chip>Log File: Latest Log File</Chip>
          <Chip>Current Rule</Chip>
        </QueryBox>
      </QueryRow>
      <ResultLine>Showing first 50 results (1.3 sec.) out of at least 50 results</ResultLine>
      <LogTable>
        <colgroup>
          {[125, 22, 22, 22, 22, 100].map((w, i) => <col key={i} width={w} />)}
          <col />
        </colgroup>
        <thead><tr><th>Time</th><th>..</th><th>..</th><th>..</th><th>..</th><th>Origin</th><th>Source</th></tr></thead>
        <tbody>
          {logs.map(([time, down, bg], i) => (
            <LogRow key={i} $bg={bg}>
              <td>{time}</td>
              <td><BricksIcon /></td>
              <td><CellFlex $pad={1}><BlockIcon /></CellFlex></td>
              <td><CellFlex $pad={1}><LinkNodes /></CellFlex></td>
              <td><CellFlex $pad={3}><UpDown down={down} /></CellFlex></td>
              <td><CellFlex $pad={1}><GatewayIcon color="#27508a" />CP-SG</CellFlex></td>
              <td><CellFlex $pad={4}>win10_192.168.1.20</CellFlex></td>
            </LogRow>
          ))}
        </tbody>
      </LogTable>
    </LogPanel>
  );
}

function ObjectPicker() {
  return (
    <Picker role="dialog" aria-label="Add application">
      <PickerBar>
        <IconSlot $w={12}><Asterisk color={c.navy} /></IconSlot>
        <Select $w={13} $size={11} aria-label="Category" defaultValue="All"><option>All</option></Select>
        <Caret />
        <PickerSearch>
          <SearchIcon />
          <input aria-label="Search objects" defaultValue="social net" />
          <TextCursor />
          <BareButton aria-label="Clear"><ClearIcon /></BareButton>
        </PickerSearch>
        <BareButton aria-label="Filter"><FunnelIcon w={12} /><Caret /></BareButton>
        <Divider />
        <BareButton aria-label="New"><SparkIcon /><Caret /></BareButton>
        <CloseButton aria-label="Close"><CrossIcon w={9} /></CloseButton>
      </PickerBar>
      <PickerBody>
        <ResultList>
          <Result><EntryIcon><SiteIcon /></EntryIcon><span>Green <mark>Social Net</mark>work</span></Result>
          <Result><EntryIcon><MagicianIcon /></EntryIcon><span>Magician <mark>Social Net</mark>work</span></Result>
          <PickedResult><PlusIcon w={10} /><TagIcon /><span><mark>Social Net</mark>working</span></PickedResult>
        </ResultList>
        <Detail>
          <DetailView>
            <DetailText>
              <CutLine><span>y</span><span>g</span><span /><span>pp</span></CutLine>
              <hr />
              <Prose>{'Social networking is a method to link communities of people together in some\nfashion, usually by software.  The software, though varies from network to network,\nusually gives users the ability to share and upload photos, videos and bookmarks,\nblog, message friends, link with or make new friends.\n\nExamples:    http://www.linkedin.com, http://www.facebook.com, http://\nwww.myspace.com'}</Prose>
              <SideSection as="div" $gap={22}><DottedHeading as="div" $size={14}>Match By</DottedHeading></SideSection>
              <Bullets>
                <li>Site and application category</li>
                <li>Services:{ports.map(([name, color]) => <Service key={name}><Globe color={color} />{name}</Service>)}</li>
              </Bullets>
              <SideSection as="div" $gap={33}><DottedHeading as="div" $size={14}>Relevant Blades</DottedHeading></SideSection>
              <Blades><AppControlIcon />Application Control<Divider $color="#8d8d8d" /><span /><UrlFilterIcon />URL Filtering</Blades>
            </DetailText>
            <VTrack><ScrollThumb /></VTrack>
          </DetailView>
          <ScrollTrack $h={13}><ScrollThumb $margin="0 37px 0 13px" /></ScrollTrack>
        </Detail>
      </PickerBody>
      <PickerFooter>3 items<Grip /></PickerFooter>
    </Picker>
  );
}

export default function App() {
  return (
    <Frame>
      <Global />
      <Workspace>
        <TabStrip>
          <PageTab>Standard</PageTab>
          <BareButton aria-label="New tab"><PlusIcon color="#a7b0bf" /></BareButton>
        </TabStrip>
        <Page>
          <SideNav />
          <Main>
            <RuleToolbar />
            <RuleTable />
            <ScrollTrack $h={18} $top={4}><ScrollThumb $margin="0 0 0 301px" /></ScrollTrack>
            <LogsView />
          </Main>
        </Page>
      </Workspace>
      <Validations>
        <ValidationTitle>Validations</ValidationTitle>
        <DottedRule />
      </Validations>
      <Rail>
        <BareButton aria-label="Hide panel"><DoubleArrow color="#c9cdd6" flip /></BareButton>
        <RailTab $h={60} $top={11}>Objects</RailTab>
        <RailTab $h={90} $top={7} $on>Validations</RailTab>
      </Rail>
      <ObjectPicker />
      <Watermark aria-hidden="true"><NetworkMark /><WatermarkName>securityzone.vn</WatermarkName></Watermark>
    </Frame>
  );
}
